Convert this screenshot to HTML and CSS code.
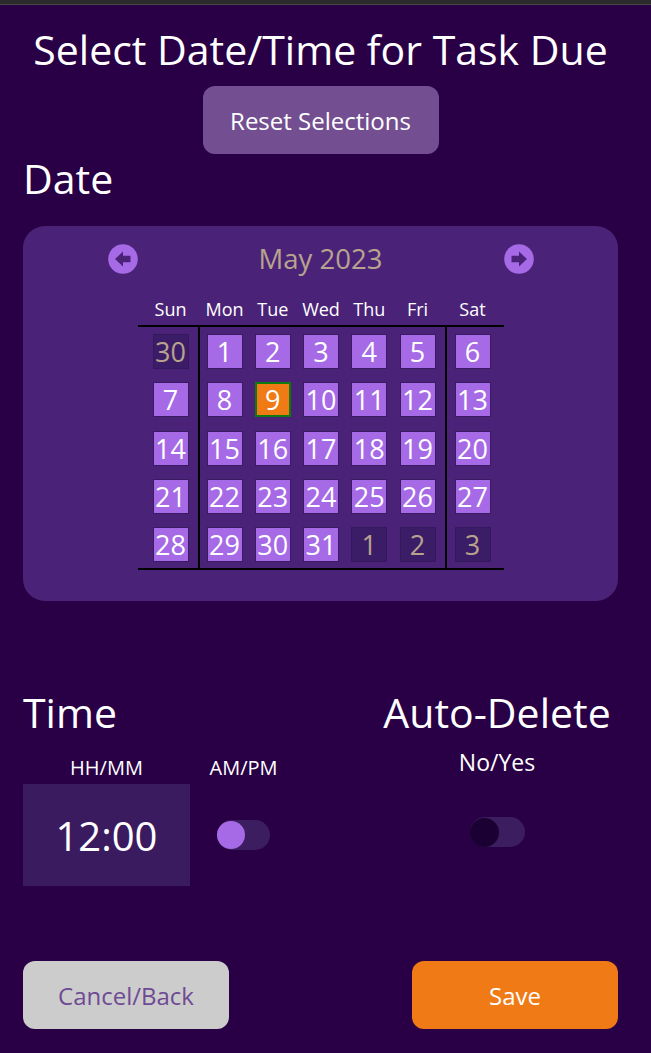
FILE: index.html
```html
<!DOCTYPE html>
<html lang="en">
<head>
<meta charset="utf-8">
<title>Select Date/Time for Task Due</title>
<link rel="stylesheet" href="styles.css">
</head>
<body>
<div class="topbar"></div>
<main class="page">
  <h1 class="title">Select Date/Time for Task Due</h1>
  <div class="reset-row"><button class="btn reset">Reset Selections</button></div>
  <h2 class="section-h">Date</h2>
  <section class="card">
    <div class="month-row">
      <svg class="nav" width="30" height="30" viewBox="0 0 30 30"><circle cx="15" cy="15" r="14.8" fill="#a66ae6"/><path d="M7 15 L15 7.6 L15 11.8 L22.5 11.8 L22.5 18.2 L15 18.2 L15 22.4 Z" fill="#4a2378"/></svg>
      <div class="month">May 2023</div>
      <svg class="nav" width="30" height="30" viewBox="0 0 30 30"><circle cx="15" cy="15" r="14.8" fill="#a66ae6"/><path d="M23 15 L15 7.6 L15 11.8 L7.5 11.8 L7.5 18.2 L15 18.2 L15 22.4 Z" fill="#4a2378"/></svg>
    </div>
    <div class="cal">
      <div class="cal-head">
        <div class="dh sun">Sun</div><div class="dh">Mon</div><div class="dh">Tue</div><div class="dh">Wed</div><div class="dh">Thu</div><div class="dh">Fri</div><div class="dh sat">Sat</div>
      </div>
      <div class="cal-body">
        <div class="cell sun"><div class="sq out">30</div></div>
        <div class="cell"><div class="sq">1</div></div>
        <div class="cell"><div class="sq">2</div></div>
        <div class="cell"><div class="sq">3</div></div>
        <div class="cell"><div class="sq">4</div></div>
        <div class="cell"><div class="sq">5</div></div>
        <div class="cell sat"><div class="sq">6</div></div>

        <div class="cell sun"><div class="sq">7</div></div>
        <div class="cell"><div class="sq">8</div></div>
        <div class="cell"><div class="sq sel">9</div></div>
        <div class="cell"><div class="sq">10</div></div>
        <div class="cell"><div class="sq">11</div></div>
        <div class="cell"><div class="sq">12</div></div>
        <div class="cell sat"><div class="sq">13</div></div>

        <div class="cell sun"><div class="sq">14</div></div>
        <div class="cell"><div class="sq">15</div></div>
        <div class="cell"><div class="sq">16</div></div>
        <div class="cell"><div class="sq">17</div></div>
        <div class="cell"><div class="sq">18</div></div>
        <div class="cell"><div class="sq">19</div></div>
        <div class="cell sat"><div class="sq">20</div></div>

        <div class="cell sun"><div class="sq">21</div></div>
        <div class="cell"><div class="sq">22</div></div>
        <div class="cell"><div class="sq">23</div></div>
        <div class="cell"><div class="sq">24</div></div>
        <div class="cell"><div class="sq">25</div></div>
        <div class="cell"><div class="sq">26</div></div>
        <div class="cell sat"><div class="sq">27</div></div>

        <div class="cell sun"><div class="sq">28</div></div>
        <div class="cell"><div class="sq">29</div></div>
        <div class="cell"><div class="sq">30</div></div>
        <div class="cell"><div class="sq">31</div></div>
        <div class="cell"><div class="sq out">1</div></div>
        <div class="cell"><div class="sq out">2</div></div>
        <div class="cell sat"><div class="sq out">3</div></div>
      </div>
    </div>
  </section>

  <div class="lower">
    <div class="time-col">
      <h2 class="section-h">Time</h2>
      <div class="time-grid">
        <div class="lbl">HH/MM</div>
        <div class="lbl">AM/PM</div>
        <div class="time-box">12:00</div>
        <div class="toggle on"><span class="knob"></span></div>
      </div>
    </div>
    <div class="auto-col">
      <h2 class="section-h">Auto-Delete</h2>
      <div class="yesno">No/Yes</div>
      <div class="toggle off"><span class="knob"></span></div>
    </div>
  </div>

  <div class="actions">
    <button class="btn cancel">Cancel/Back</button>
    <button class="btn save">Save</button>
  </div>
</main>
</body>
</html>
```

FILE: styles.css
```css
* { box-sizing: border-box; }

html, body {
  margin: 0;
  background: #290045;
}

body {
  font-family: "Open Sans", "Noto Sans", sans-serif;
  color: #ffffff;
  height: 1053px;
  overflow: hidden;
}

.topbar {
  height: 5px;
  background: #2b2b2b;
  border-bottom: 1px solid #474747;
}

.page {
  padding: 0 33px 0 23px;
}

.title {
  margin: 20px 0 0;
  font-size: 41px;
  line-height: 48px;
  font-weight: 400;
  text-align: center;
  white-space: nowrap;
}

.reset-row {
  display: flex;
  justify-content: center;
  margin-top: 13px;
}

.btn {
  border: none;
  font-family: "Open Sans", "Noto Sans", sans-serif;
  font-size: 24px;
  border-radius: 12px;
  height: 68px;
  padding: 0;
}

.reset {
  width: 236px;
  background: #734f91;
  color: #ffffff;
}

.section-h {
  margin: 0;
  font-size: 41px;
  line-height: 48px;
  font-weight: 400;
  white-space: nowrap;
}

.card {
  margin-top: 24px;
  background: #4a2378;
  border-radius: 22px;
  padding: 18px 0 31px;
}

.month-row {
  width: 426px;
  margin: 0 auto;
  height: 30px;
  display: flex;
  justify-content: space-between;
  align-items: center;
}

.nav { display: block; }

.month {
  font-size: 27.5px;
  line-height: 30px;
  color: #b8a48e;
}

.cal {
  width: 366px;
  margin: 23px auto 0;
}

.cal-head,
.cal-body {
  display: grid;
  grid-template-columns: 62px repeat(4, 48.25px) 52px 59px;
}

.cal-head {
  grid-auto-rows: 28px;
  border-bottom: 2px solid #000000;
}

.dh {
  width: 36px;
  margin-left: 7px;
  display: flex;
  justify-content: center;
  font-size: 18px;
  line-height: 24px;
  white-space: nowrap;
}

.dh.sun { margin-left: 15px; }
.dh.sat { margin-left: 10px; }

.cal-body {
  grid-auto-rows: 48.3px;
  border-bottom: 2px solid #000000;
}

.cell {
  padding: 7px 0 0 7px;
}

.cell.sun {
  padding-left: 15px;
  border-right: 2px solid #000000;
}

.cell.sat {
  padding-left: 8px;
  border-left: 2px solid #000000;
}

.sq {
  width: 36px;
  height: 35px;
  border: 1px solid #3a1a63;
  background: #a66ae6;
  color: #ffffff;
  font-size: 27px;
  line-height: 33px;
  text-align: center;
}

.sq.out {
  background: #3b1c67;
  border-color: #361860;
  color: #b7a38d;
}

.sq.sel {
  background: #f07a14;
  border: 2px solid #0d7b0d;
  line-height: 31px;
}

.lower {
  display: flex;
  margin-top: 87px;
}

.time-grid {
  margin-top: 20px;
  display: grid;
  grid-template-columns: 167px 53px;
  column-gap: 27px;
  row-gap: 4px;
  align-items: center;
}

.lbl {
  font-size: 20px;
  line-height: 24px;
  text-align: center;
  justify-self: center;
  white-space: nowrap;
}

.time-box {
  height: 102px;
  background: #3b1b5f;
  font-size: 40px;
  display: flex;
  align-items: center;
  justify-content: center;
}

.toggle {
  width: 53px;
  height: 30px;
  border-radius: 15px;
  background: #3c1d60;
  display: flex;
  align-items: center;
}

.toggle .knob {
  display: block;
  width: 28px;
  height: 28px;
  border-radius: 50%;
  background: #a66ae6;
}

.toggle.off {
  width: 55px;
  margin-top: 41px;
}

.toggle.off .knob {
  width: 29px;
  height: 29px;
  background: #1b0033;
}

.auto-col {
  margin-left: auto;
  width: 242px;
  display: flex;
  flex-direction: column;
  align-items: center;
}

.yesno {
  margin-top: 12px;
  font-size: 23px;
  line-height: 28px;
  white-space: nowrap;
}

.actions {
  display: flex;
  justify-content: space-between;
  margin-top: 75px;
}

.cancel {
  width: 206px;
  background: #cccccc;
  color: #6f4a94;
}

.save {
  width: 206px;
  background: #f07a16;
  color: #ffffff;
}
```
